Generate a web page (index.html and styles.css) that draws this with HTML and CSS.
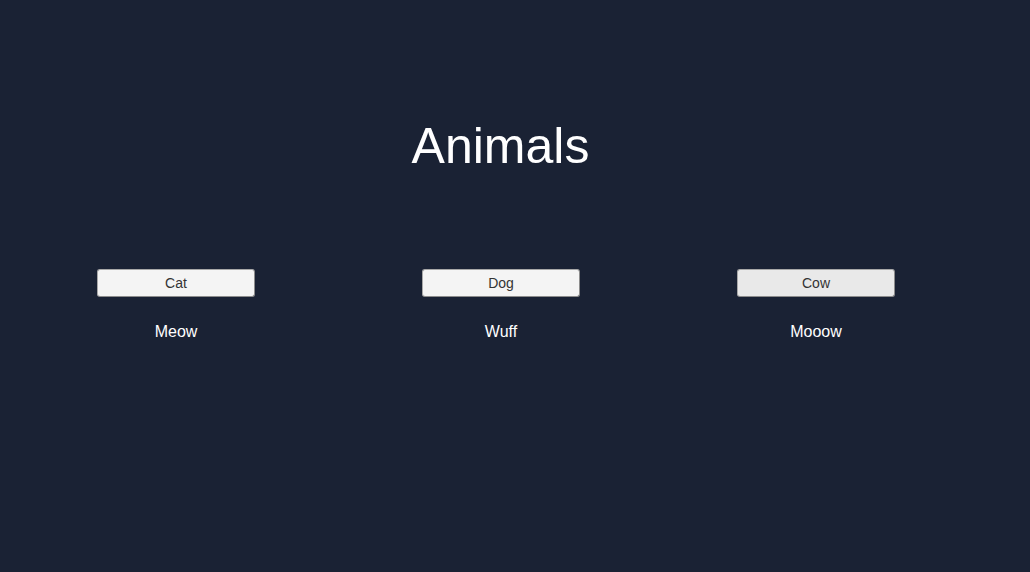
FILE: index.html
```html
<!DOCTYPE html>
<html>
<head>
<meta charset="utf-8">
<link rel="stylesheet" href="styles.css">
</head>
<body>
<main class="page">
  <h1 class="title">Animals</h1>
  <section class="animals">
    <div class="animal">
      <button class="animal-btn">Cat</button>
      <p class="sound">Meow</p>
    </div>
    <div class="animal">
      <button class="animal-btn">Dog</button>
      <p class="sound">Wuff</p>
    </div>
    <div class="animal">
      <button class="animal-btn animal-btn-hover">Cow</button>
      <p class="sound">Mooow</p>
    </div>
  </section>
</main>
</body>
</html>
```
FILE: styles.css
```css
html, body {
  margin: 0;
  padding: 0;
  background: #1a2234;
  font-family: "Liberation Sans", Arial, sans-serif;
  color: #ffffff;
}
.page {
  width: 1030px;
  height: 572px;
  display: flex;
  flex-direction: column;
}
.title {
  margin: 118px 0 0 0;
  font-size: 50px;
  font-weight: normal;
  line-height: 56px;
  text-align: center;
  padding-right: 29px;
}
.animals {
  display: grid;
  grid-template-columns: 325px 315px 158px;
  padding-left: 97px;
  margin-top: 95px;
}
.animal {
  width: 158px;
  display: flex;
  flex-direction: column;
  align-items: center;
}
.animal-btn {
  width: 158px;
  height: 28px;
  box-sizing: border-box;
  background: #f4f4f4;
  border: 1px solid #8c8c8c;
  border-top-color: #a8a8a8;
  border-left-color: #a8a8a8;
  border-radius: 3px;
  font-family: "Liberation Sans", Arial, sans-serif;
  font-size: 14px;
  color: #333333;
  padding: 0;
}
.animal-btn-hover {
  background: #e9e9e9;
}
.sound {
  margin: 25px 0 0 0;
  font-size: 16px;
  line-height: 20px;
  color: #ffffff;
}
```
